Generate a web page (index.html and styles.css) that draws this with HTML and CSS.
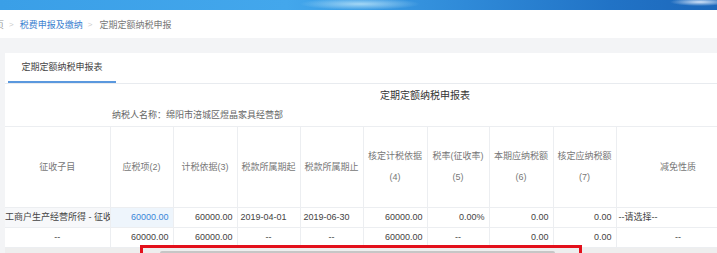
FILE: index.html
```html
<!DOCTYPE html>
<html lang="zh-CN">
<head>
  <meta charset="UTF-8" />
  <title>定期定额纳税申报</title>
  <link rel="stylesheet" href="styles.css">
</head>
<body>
  <!-- top banner -->
  <div class="banner"></div>

  <!-- breadcrumb -->
  <div class="crumbs">
    <span class="crumb-home">首页</span>
    <span class="sep">&gt;</span>
    <a href="#" class="crumb-link">税费申报及缴纳</a>
    <span class="sep">&gt;</span>
    <span class="crumb-current">定期定额纳税申报</span>
  </div>

  <div class="page">
    <div class="panel">
      <div class="tabs">
        <div class="tab active">定期定额纳税申报表</div>
      </div>

      <h1 class="report-title">定期定额纳税申报表</h1>
      <div class="taxpayer">纳税人名称：绵阳市涪城区煜晶家具经营部</div>

      <div class="table-wrap">
        <table class="report">
          <colgroup>
            <col style="width:105px">
            <col style="width:63px">
            <col style="width:64px">
            <col style="width:63px">
            <col style="width:63px">
            <col style="width:64px">
            <col style="width:62px">
            <col style="width:64px">
            <col style="width:63px">
            <col style="width:124px">
          </colgroup>
          <tr class="head">
            <th>征收子目</th>
            <th>应税项(2)</th>
            <th>计税依据(3)</th>
            <th>税款所属期起</th>
            <th>税款所属期止</th>
            <th>核定计税依据<br>(4)</th>
            <th>税率(征收率)<br>(5)</th>
            <th>本期应纳税额<br>(6)</th>
            <th>核定应纳税额<br>(7)</th>
            <th>减免性质</th>
          </tr>
          <tr>
            <td class="item">工商户生产经营所得 - 征收率</td>
            <td class="num link-cell">60000.00</td>
            <td class="num">60000.00</td>
            <td class="date">2019-04-01</td>
            <td class="date">2019-06-30</td>
            <td class="num">60000.00</td>
            <td class="num">0.00%</td>
            <td class="num">0.00</td>
            <td class="num">0.00</td>
            <td class="select">--请选择--</td>
          </tr>
          <tr>
            <td class="mid">--</td>
            <td class="num">60000.00</td>
            <td class="num">60000.00</td>
            <td class="mid">--</td>
            <td class="mid">--</td>
            <td class="num">60000.00</td>
            <td class="mid">--</td>
            <td class="num">0.00</td>
            <td class="num">0.00</td>
            <td class="mid">--</td>
          </tr>
        </table>
      </div>

      <div class="hscroll">
        <div class="thumb"></div>
      </div>
      <div class="mark"></div>
    </div>
  </div>
</body>
</html>
```

FILE: styles.css
```css
/* base */
body {
  margin: 0;
  padding: 0;
  font-family: "Liberation Sans", "Noto Sans CJK SC", sans-serif;
  font-size: 9px;
  color: #444;
  background: #f3f4f6;
  overflow: hidden;
}

/* header banner */
.banner {
  height: 10px;
  background:
    radial-gradient(ellipse 60px 6px at 360px 4px, rgba(190, 230, 250, 0.8), rgba(190, 230, 250, 0) 100%),
    radial-gradient(ellipse 30px 4px at 700px 2px, rgba(230, 240, 255, 0.9), rgba(230, 240, 255, 0) 100%),
    linear-gradient(90deg, #3a9fe7 0%, #43a7ec 40%, #2f8ad8 65%, #2173c6 85%, #1d68bb 100%);
}

/* breadcrumb */
.crumbs {
  height: 28px;
  background: #fff;
  display: flex;
  align-items: center;
  gap: 5px;
  white-space: nowrap;
}

.crumb-home {
  margin-left: -14px;
  color: #999;
}

.sep {
  color: #ccc;
  font-size: 8px;
}

.crumb-link {
  color: #3a7fd0;
  text-decoration: none;
  margin-left: 1px;
}

.crumb-current {
  color: #777;
  margin-left: 2px;
}

/* content */
.page {
  padding: 15px 0 0 5px;
}

.panel {
  position: relative;
  background: #fff;
  height: 200px;
  overflow: hidden;
}

.tabs {
  height: 30px;
  border-bottom: 1px solid #e8ebef;
  display: flex;
}

.tab {
  margin-left: 3px;
  width: 108px;
  text-align: center;
  line-height: 30px;
  color: #444;
  box-sizing: border-box;
}

.tab.active {
  border-bottom: 2px solid #5a98de;
  line-height: 29px;
}

.report-title {
  margin: 5px 0 0 375px;
  font-size: 10px;
  font-weight: normal;
  line-height: 14px;
  color: #333;
  white-space: nowrap;
}

.taxpayer {
  margin: 5px 0 0 107px;
  line-height: 14px;
  color: #666;
}

.table-wrap {
  margin-top: 4px;
  width: 760px;
}

/* report table */
.report {
  border-collapse: collapse;
  table-layout: fixed;
  width: 735px;
  border-top: 1px solid #eceef1;
}

.report th,
.report td {
  border: 1px solid #eceef1;
  white-space: nowrap;
  overflow: hidden;
  padding: 0 4px;
}

.report tr > :first-child {
  border-left: none;
}

.report th {
  height: 80px;
  font-weight: normal;
  color: #777;
  line-height: 21px;
  text-align: center;
  padding: 0 2px;
}

.report td {
  height: 19px;
  line-height: 19px;
}

.report .item {
  padding: 0;
  background: #f7f8fa;
  text-overflow: clip;
}

.report .num {
  text-align: right;
}

.report .mid {
  text-align: center;
}

.report .date {
  padding-left: 3px;
}

.report .select {
  padding-left: 2px;
}

.report .link-cell {
  color: #3a86d8;
  background: #eef5fc;
}

/* horizontal scrollbar */
.hscroll {
  height: 10px;
  background: #eeeeee;
  position: relative;
}

.thumb {
  position: absolute;
  left: 155px;
  width: 395px;
  top: 3px;
  height: 10px;
  background: #c6c6c6;
  border-radius: 2px;
}

/* red annotation box */
.mark {
  position: absolute;
  left: 135px;
  top: 192px;
  width: 436px;
  height: 20px;
  border: 3px solid #e3101b;
}
```
